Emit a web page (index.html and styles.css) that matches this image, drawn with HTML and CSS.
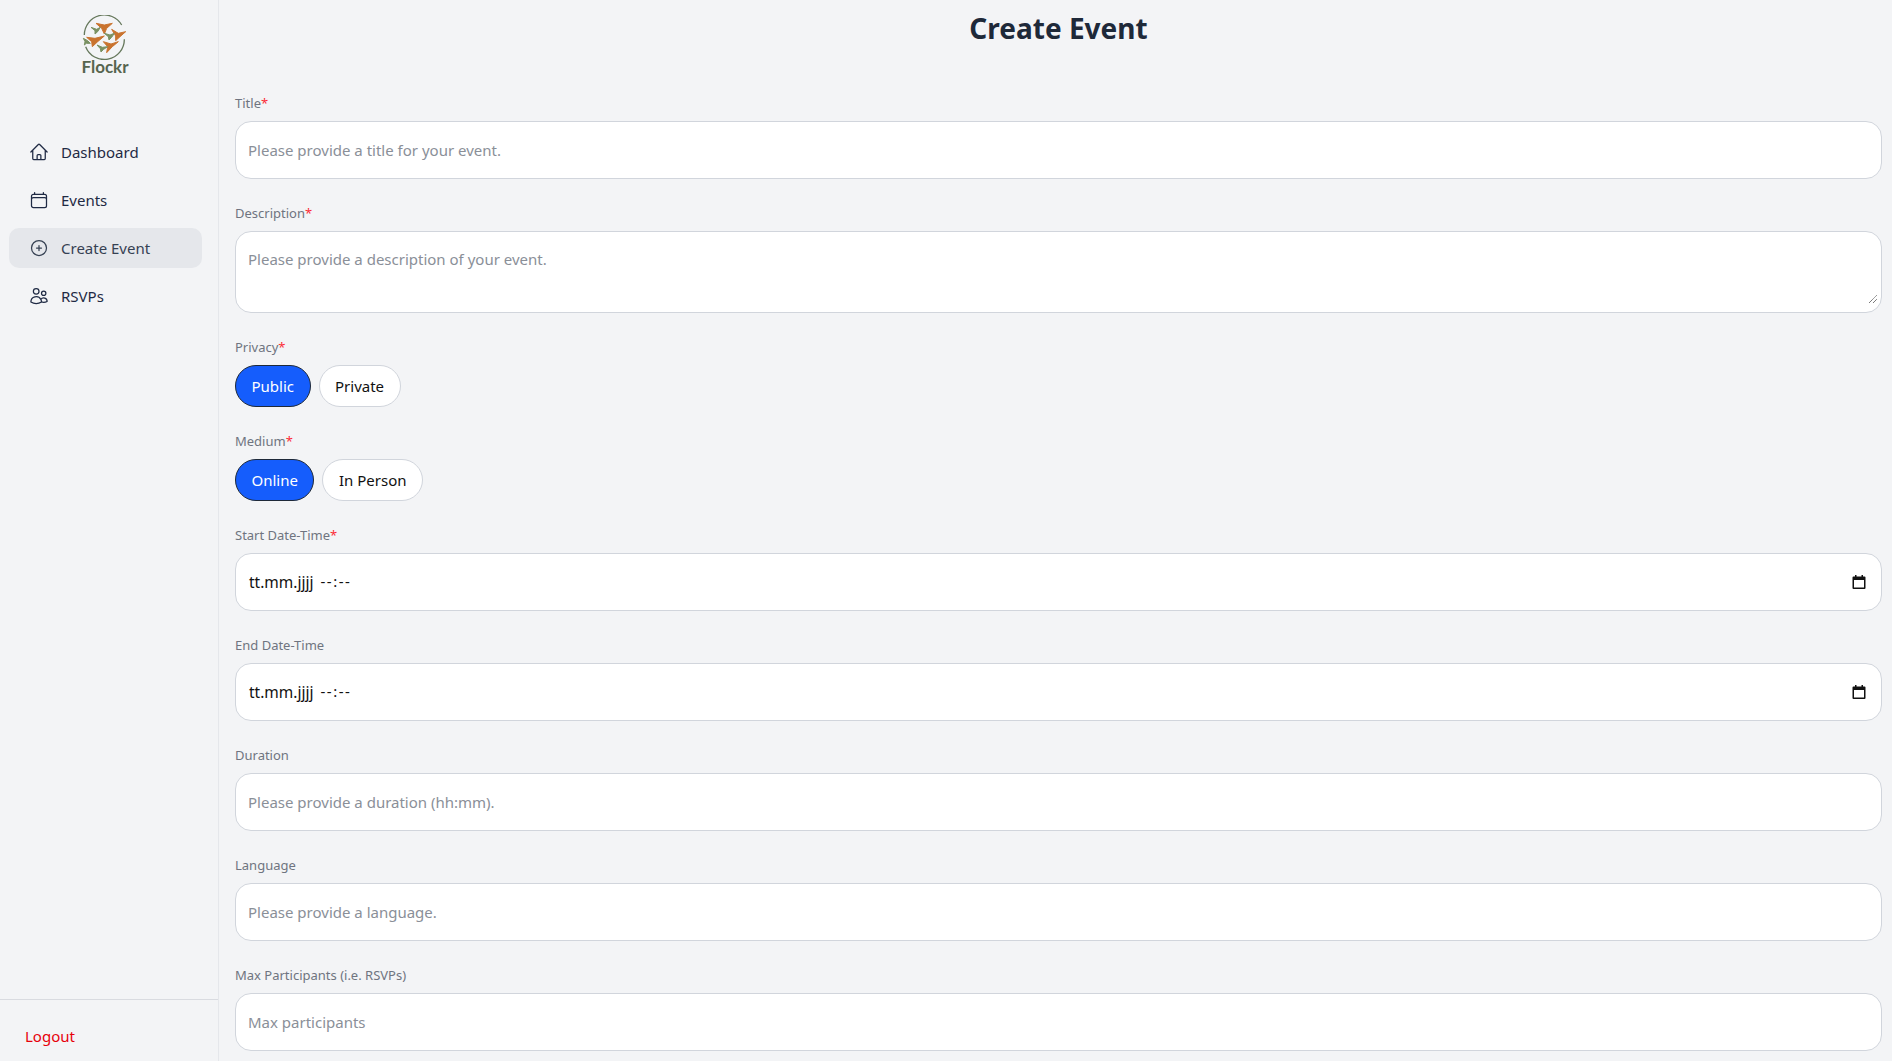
FILE: index.html
```html
<!DOCTYPE html>
<html lang="en">
<head>
<meta charset="utf-8">
<title>Create Event</title>
<link rel="stylesheet" href="styles.css">
</head>
<body>
<div class="app">
  <aside class="sidebar">
    <div class="brand">
      <svg class="logo" viewBox="245 45 150 135" width="50" height="45" aria-hidden="true">
        <path d="M258 105A60 60 0 0 1 370 75" fill="none" stroke="#66785c" stroke-width="4"/>
        <path d="M378 118A60 60 0 0 1 262 140" fill="none" stroke="#66785c" stroke-width="4"/>
        <g class="birds-orange">
          <path d="M293 70L318 75 342 70 325 85 318 102 310 85z"/>
          <path d="M340 88L360 100 382 95 365 110 352 122 352 108z"/>
          <path d="M265 112L290 115 318 108 298 125 282 140 280 125z"/>
          <path d="M315 125L338 132 360 125 342 140 325 158 328 140z"/>
        </g>
        <g class="birds-green">
          <path d="M278 82L295 88 306 82 298 95 290 102 290 92z"/>
          <path d="M318 100L335 105 348 100 340 112 332 120 330 110z"/>
          <path d="M255 115L268 122 276 130 264 130 258 135 260 125z"/>
          <path d="M296 135L312 142 328 140 316 148 308 156 306 146z"/>
        </g>
      </svg>
      <span class="brand-name">Flockr</span>
    </div>
    <nav class="nav">
      <a class="nav-item">
        <svg class="nav-icon" viewBox="0 0 24 24"><path d="M2.25 12l8.954-8.955a1.126 1.126 0 0 1 1.591 0L21.75 12M4.5 9.75v10.125c0 .621.504 1.125 1.125 1.125H9.750v-4.875c0-.621.504-1.125 1.125-1.125h2.25c.621 0 1.125.504 1.125 1.125V21h4.125c.621 0 1.125-.504 1.125-1.125V9.750M8.25 21h8.25"/></svg>
        <span>Dashboard</span>
      </a>
      <a class="nav-item">
        <svg class="nav-icon" viewBox="0 0 24 24"><path d="M6.75 3v2.25M17.25 3v2.25M3 18.75V7.5a2.25 2.25 0 0 1 2.25-2.25h13.5A2.25 2.25 0 0 1 21 7.5v11.25M3 18.75A2.25 2.25 0 0 0 5.25 21h13.5A2.25 2.25 0 0 0 21 18.75M3 18.75v-7.5A2.25 2.25 0 0 1 5.25 9h13.5A2.25 2.25 0 0 1 21 11.25v7.5"/></svg>
        <span>Events</span>
      </a>
      <a class="nav-item active">
        <svg class="nav-icon" viewBox="0 0 24 24"><path d="M12 9v6m3-3H9m12 0a9 9 0 1 1-18 0 9 9 0 0 1 18 0z"/></svg>
        <span>Create Event</span>
      </a>
      <a class="nav-item">
        <svg class="nav-icon" viewBox="0 0 24 24"><path d="M15 19.128a9.38 9.38 0 0 0 2.625.372 9.337 9.337 0 0 0 4.121-.952 4.125 4.125 0 0 0-7.533-2.493M15 19.128v-.003c0-1.113-.285-2.16-.786-3.07M15 19.128v.106A12.318 12.318 0 0 1 8.624 21c-2.331 0-4.512-.645-6.374-1.766l-.001-.109a6.375 6.375 0 0 1 11.964-3.07M12 6.375a3.375 3.375 0 1 1-6.75 0 3.375 3.375 0 0 1 6.75 0zm8.25 2.25a2.625 2.625 0 1 1-5.25 0 2.625 2.625 0 0 1 5.25 0z"/></svg>
        <span>RSVPs</span>
      </a>
    </nav>
    <div class="logout-wrap"><a class="logout">Logout</a></div>
  </aside>
  <main class="main">
    <h1 class="page-title">Create Event</h1>
    <form class="form">
      <div class="field">
        <label class="label">Title<span class="req">*</span></label>
        <input class="input" type="text" placeholder="Please provide a title for your event.">
      </div>
      <div class="field">
        <label class="label">Description<span class="req">*</span></label>
        <div class="textarea-wrap">
          <textarea class="input textarea" placeholder="Please provide a description of your event."></textarea>
          <svg class="grip" viewBox="0 0 8 8" width="8" height="8" aria-hidden="true"><path d="M0 8L8 0M4 8L8 4" stroke="#444" stroke-width="1" stroke-dasharray="1 .6" fill="none"/></svg>
        </div>
      </div>
      <div class="field">
        <label class="label">Privacy<span class="req">*</span></label>
        <div class="pills">
          <button type="button" class="pill selected">Public</button>
          <button type="button" class="pill">Private</button>
        </div>
      </div>
      <div class="field">
        <label class="label">Medium<span class="req">*</span></label>
        <div class="pills">
          <button type="button" class="pill selected">Online</button>
          <button type="button" class="pill">In Person</button>
        </div>
      </div>
      <div class="field">
        <label class="label">Start Date-Time<span class="req">*</span></label>
        <div class="date-box">
          <span class="date-text"><span class="date-day">tt.mm.jjjj</span><span class="date-time">--:--</span></span>
          <svg class="date-icon" viewBox="0 0 14 14" width="14" height="14"><path d="M3 0h1.5v1.5h5V0H11v1.5h1.5A1 1 0 0 1 13.5 2.500V13a1 1 0 0 1-1 1h-11a1 1 0 0 1-1-1V2.500a1 1 0 0 1 1-1H3zM2 5v7.500h10V5z" fill="#111"/></svg>
        </div>
      </div>
      <div class="field">
        <label class="label">End Date-Time</label>
        <div class="date-box">
          <span class="date-text"><span class="date-day">tt.mm.jjjj</span><span class="date-time">--:--</span></span>
          <svg class="date-icon" viewBox="0 0 14 14" width="14" height="14"><path d="M3 0h1.5v1.5h5V0H11v1.500h1.500A1 1 0 0 1 13.5 2.500V13a1 1 0 0 1-1 1h-11a1 1 0 0 1-1-1V2.500a1 1 0 0 1 1-1H3zM2 5v7.500h10V5z" fill="#111"/></svg>
        </div>
      </div>
      <div class="field">
        <label class="label">Duration</label>
        <input class="input" type="text" placeholder="Please provide a duration (hh:mm).">
      </div>
      <div class="field">
        <label class="label">Language</label>
        <input class="input" type="text" placeholder="Please provide a language.">
      </div>
      <div class="field">
        <label class="label">Max Participants (i.e. RSVPs)</label>
        <input class="input" type="text" placeholder="Max participants">
      </div>
    </form>
  </main>
</div>
</body>
</html>
```
FILE: styles.css
```css
* { box-sizing: border-box; }
html, body { margin: 0; height: 100%; overflow: hidden; }
body {
  background: #f3f4f6;
  color: #1f2937;
  font-family: "Noto Sans", "Open Sans", sans-serif;
  font-size: 15px;
}
.app { display: flex; height: 1061px; }
.sidebar {
  width: 219px;
  flex: none;
  display: flex;
  flex-direction: column;
  border-right: 1px solid #e5e7eb;
}
.brand {
  height: 132px;
  display: flex;
  flex-direction: column;
  align-items: center;
  padding: 15px 8px 0 0;
}
.logo { display: block; filter: blur(.3px); }
.birds-orange { fill: #c9732f; stroke: #c9732f; stroke-width: 3; stroke-linejoin: round; }
.birds-green { fill: #7a9163; stroke: #7a9163; stroke-width: 3; stroke-linejoin: round; }
.brand-name {
  color: #56654f;
  font-family: Lato, sans-serif;
  font-size: 17px;
  font-weight: 700;
  line-height: 14px;
}
.nav {
  display: flex;
  flex-direction: column;
  gap: 8px;
  padding: 0 16px 0 9px;
  flex: 1;
}
.nav-item {
  height: 40px;
  display: flex;
  align-items: center;
  gap: 12px;
  padding-left: 20px;
  border-radius: 10px;
  color: #1f2a44;
  font-size: 15px;
}
.nav-item.active { background: #e5e7eb; color: #364153; }
.nav-icon {
  width: 20px;
  height: 20px;
  flex: none;
  fill: none;
  stroke: currentColor;
  stroke-width: 1.5;
  stroke-linecap: round;
  stroke-linejoin: round;
}
.logout-wrap {
  height: 62px;
  border-top: 1px solid #d9dbe0;
  padding: 26px 0 0 25px;
}
.logout { display: block; color: #e7000b; font-size: 15px; line-height: 20px; }
.main { flex: 1; min-width: 0; padding: 10px 10px 0 16px; }
.page-title {
  margin: 0 0 47px;
  text-align: center;
  font-size: 28px;
  line-height: 36px;
  font-weight: 700;
  color: #1e2939;
}
.form { display: flex; flex-direction: column; gap: 24px; }
.field { display: flex; flex-direction: column; gap: 8px; }
.label { font-size: 13px; line-height: 20px; color: #6f7480; }
.req { color: #fb2c36; }
.input {
  display: block;
  width: 100%;
  height: 58px;
  padding: 0 12px;
  background: #fff;
  border: 1.5px solid #d1d5dc;
  border-radius: 16px;
  font: inherit;
  color: #111;
  outline: none;
}
.input::placeholder { color: #8a8f98; opacity: 1; }
.textarea-wrap { position: relative; }
.textarea { height: 82px; padding: 17px 12px 0; resize: none; }
.grip { position: absolute; right: 5px; bottom: 10px; display: block; }
.pills { display: flex; gap: 8px; }
.pill {
  height: 42px;
  padding: 0 15.5px;
  border: 1.5px solid #d1d5dc;
  border-radius: 999px;
  background: #fff;
  color: #111;
  font: inherit;
}
.pill.selected { background: #155dfc; border-color: #1e2939; color: #fff; }
.date-box {
  height: 58px;
  display: flex;
  align-items: center;
  justify-content: space-between;
  padding: 0 15px 0 13px;
  background: #fff;
  border: 1.5px solid #d1d5dc;
  border-radius: 16px;
  color: #111;
}
.date-text { display: flex; gap: 7px; }
.date-day { font-size: 15.5px; }
.date-time { letter-spacing: 1.5px; }
.date-icon { display: block; }
```
